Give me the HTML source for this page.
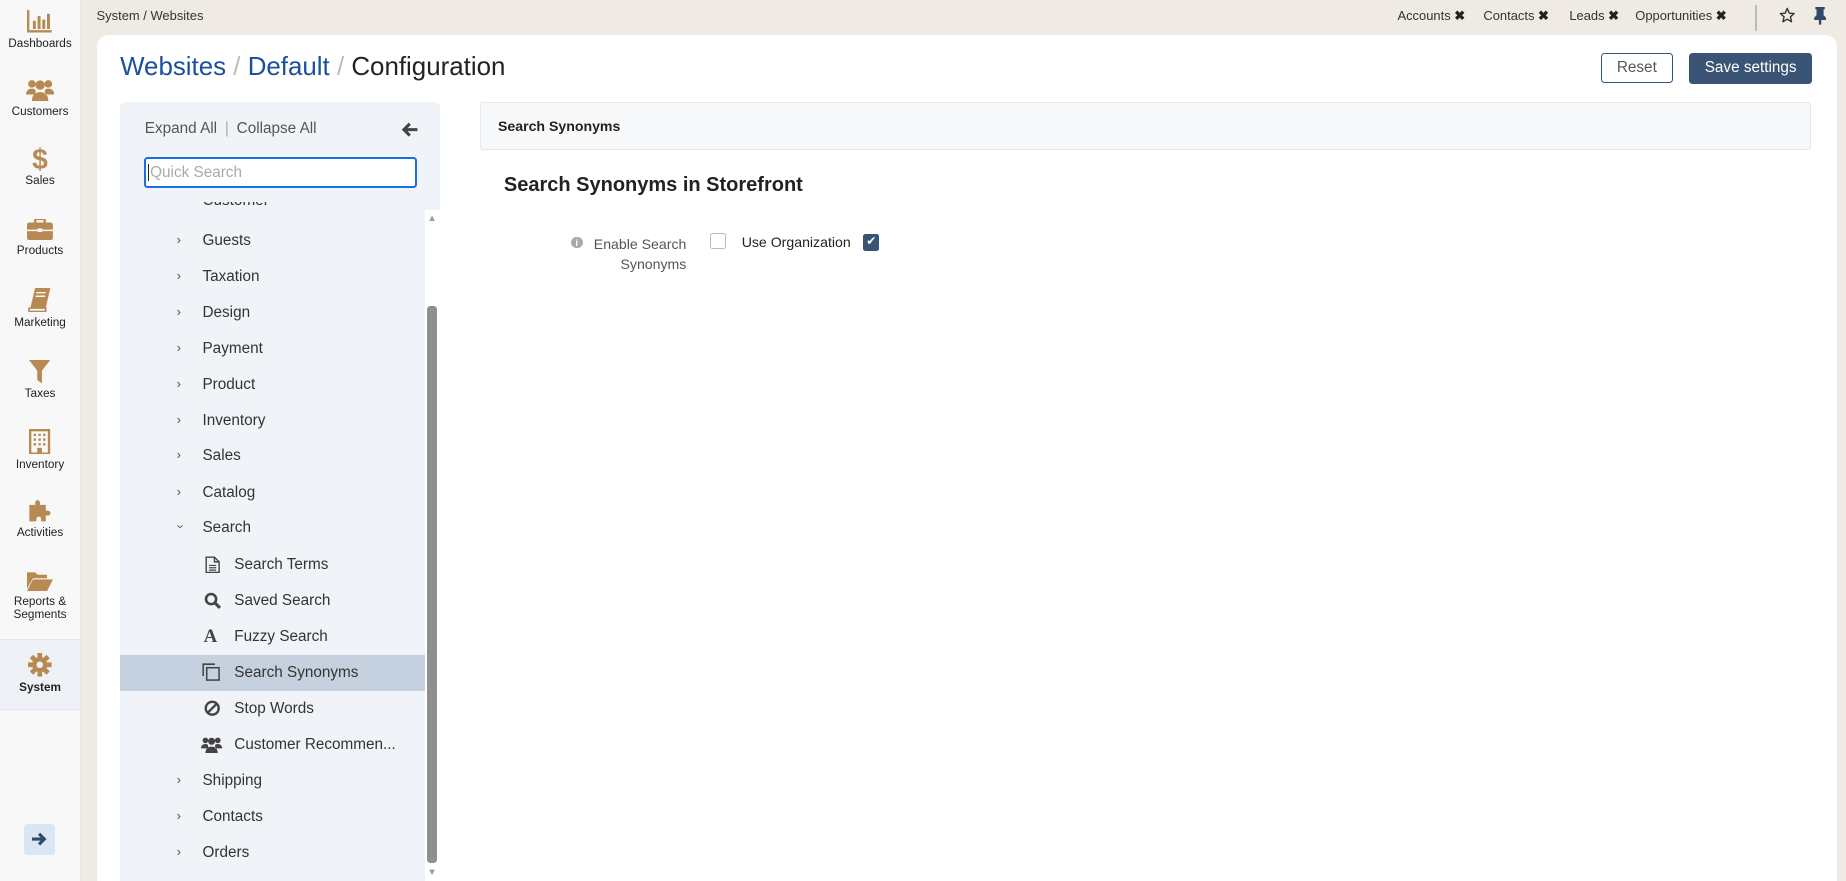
<!DOCTYPE html>
<html><head><meta charset="utf-8"><style>
html,body{margin:0;padding:0;}
html{background:#efebe4;height:881px;overflow:hidden;}
body{width:1568px;height:748px;zoom:1.17730;overflow:hidden;position:relative;background:#efebe4;font-family:"Liberation Sans",sans-serif;color:#222;}
.abs{position:absolute;}
#side{left:0;top:0;width:68px;height:748px;background:#f8f8f8;border-right:1px solid #e6e6e6;}
.si{position:absolute;left:0;width:68px;text-align:center;font-size:10px;color:#222;line-height:11px;}
.si svg{display:block;margin:0 auto 4px;}
.tab{font-size:11px;color:#333;top:7px;}
.tab b{font-size:11px;color:#222;margin-left:3px;}
#card{left:82px;top:30px;width:1478px;height:718px;background:#fff;border-radius:10px 10px 0 0;}
.tree{position:absolute;font-size:13px;color:#333;line-height:16px;}
.chev{position:absolute;left:150px;font-size:11px;color:#555;}
</style></head><body>
<div class="abs" style="left:82px;top:7px;font-size:11px;color:#333;">System / Websites</div>
<div class="abs tab" style="left:1187px;">Accounts<b>✖</b></div>
<div class="abs tab" style="left:1260px;">Contacts<b>✖</b></div>
<div class="abs tab" style="left:1333px;">Leads<b>✖</b></div>
<div class="abs tab" style="left:1389px;">Opportunities<b>✖</b></div>
<div class="abs" style="left:1491px;top:4px;width:1px;height:22px;background:#bbb;"></div>
<svg class="abs" style="left:1511px;top:6px" width="14" height="14" viewBox="0 0 24 24"><path d="M12 2l3 7 7 .6-5.4 4.7 1.7 7.2L12 17.8 5.7 21.5l1.7-7.2L2 9.6 9 9z" fill="none" stroke="#333" stroke-width="2" stroke-linejoin="round"/></svg>
<svg class="abs" style="left:1540px;top:6px" width="12" height="15" viewBox="0 0 12 15"><path d="M2 0h8v2H9v5l2 2v2H7v4H5v-4H1V9l2-2V2H2z" fill="#2f4a6a"/></svg>

<div id="side" class="abs">
 <div class="si" style="top:8px"><svg width="22" height="20" viewBox="0 0 22 20"><path d="M1 1v18h20" fill="none" stroke="#b68a52" stroke-width="2"/><rect x="5" y="10" width="2.5" height="7" fill="#b68a52"/><rect x="9" y="6" width="2.5" height="11" fill="#b68a52"/><rect x="13" y="9" width="2.5" height="8" fill="#b68a52"/><rect x="17" y="4" width="2.5" height="13" fill="#b68a52"/></svg>Dashboards</div>
 <div class="si" style="top:66px"><svg width="24" height="20" viewBox="0 0 24 20"><circle cx="5" cy="5" r="3.2" fill="#b68a52"/><circle cx="19" cy="5" r="3.2" fill="#b68a52"/><circle cx="12" cy="6" r="4" fill="#b68a52"/><path d="M0 14c0-4 3-5 5-5s3 1 3 1v4zM24 14c0-4-3-5-5-5s-3 1-3 1v4zM5 20c0-6 3-8 7-8s7 2 7 8z" fill="#b68a52"/></svg>Customers</div>
 <div class="si" style="top:125px"><div style="font-size:24px;font-weight:bold;color:#b68a52;line-height:22px;margin-bottom:2px">$</div>Sales</div>
 <div class="si" style="top:186px"><svg width="22" height="18" viewBox="0 0 22 18"><rect x="7" y="0" width="8" height="4" rx="1" fill="none" stroke="#b68a52" stroke-width="2"/><rect x="0" y="3" width="22" height="15" rx="2" fill="#b68a52"/><rect x="0" y="9" width="22" height="1.3" fill="#f8f8f8"/><rect x="9" y="8" width="4" height="3" fill="#f8f8f8"/></svg>Products</div>
 <div class="si" style="top:245px"><svg width="20" height="20" viewBox="0 0 20 20"><path d="M6 0h13l-4 17H2z" fill="#b68a52"/><path d="M2 17h13v3H2a1.5 1.5 0 010-3z" fill="none" stroke="#b68a52" stroke-width="1.5"/><path d="M7 4h8M6.5 7h8" stroke="#f8f8f8" stroke-width="1.2"/></svg>Marketing</div>
 <div class="si" style="top:306px"><svg width="18" height="20" viewBox="0 0 18 20"><path d="M0 0h18l-7 9v11l-4-3V9z" fill="#b68a52"/></svg>Taxes</div>
 <div class="si" style="top:364px"><svg width="18" height="22" viewBox="0 0 18 22"><rect x="1" y="1" width="16" height="20" fill="#f8f8f8" stroke="#b68a52" stroke-width="2"/><g fill="#b68a52"><rect x="4" y="4" width="2" height="2"/><rect x="8" y="4" width="2" height="2"/><rect x="12" y="4" width="2" height="2"/><rect x="4" y="8" width="2" height="2"/><rect x="8" y="8" width="2" height="2"/><rect x="12" y="8" width="2" height="2"/><rect x="4" y="12" width="2" height="2"/><rect x="8" y="12" width="2" height="2"/><rect x="12" y="12" width="2" height="2"/><rect x="7" y="16" width="4" height="5"/></g></svg>Inventory</div>
 <div class="si" style="top:424px"><svg width="22" height="20" viewBox="0 0 22 20"><path d="M2 5h5V3a2 2 0 014 0v2h5v5h2a2 2 0 010 4h-2v5h-4v-2a2 2 0 00-4 0v2H2z" fill="#b68a52"/></svg>Activities</div>
 <div class="si" style="top:484px"><svg width="22" height="18" viewBox="0 0 22 18"><path d="M0 2h7l2 2h8v3H5L0 16z" fill="#b68a52"/><path d="M5 8h17l-5 10H0z" fill="#b68a52"/></svg>Reports &amp;<br>Segments</div>
 <div class="abs" style="left:0;top:543px;width:68px;height:58px;background:#eef1f6;border-top:1px solid #e3e6ea;border-bottom:1px solid #e3e6ea;"></div>
 <div class="si" style="top:555px"><svg width="20" height="20" viewBox="0 0 20 20"><g fill="#b68a52"><circle cx="10" cy="10" r="6.5"/><g id="t"><rect x="8" y="0" width="4" height="5"/><rect x="8" y="15" width="4" height="5"/></g><use href="#t" transform="rotate(45 10 10)"/><use href="#t" transform="rotate(90 10 10)"/><use href="#t" transform="rotate(135 10 10)"/></g><circle cx="10" cy="10" r="2.8" fill="#eef1f6"/></svg><span style="font-weight:bold;color:#222">System</span></div>
 <div class="abs" style="left:20px;top:700px;width:27px;height:26px;background:#dbe6f3;border-radius:3px;"><svg style="position:absolute;left:7px;top:7px" width="13" height="12" viewBox="0 0 13 12"><path d="M0 6h10M6 1.5L10.5 6 6 10.5" fill="none" stroke="#2f4a6a" stroke-width="2.6"/></svg></div>
</div>

<div id="card" class="abs"></div>
<div class="abs" style="left:102px;top:43px;font-size:22px;line-height:28px;"><span style="color:#1c4f9c">Websites</span> <span style="color:#bbb">/</span> <span style="color:#1c4f9c">Default</span> <span style="color:#bbb">/</span> <span style="color:#222">Configuration</span></div>
<div class="abs" style="left:1360px;top:45px;width:59px;height:24px;border:1px solid #34557a;border-radius:3px;text-align:center;line-height:24px;font-size:13px;color:#555;">Reset</div>
<div class="abs" style="left:1435px;top:45px;width:104px;height:26px;background:#395475;border-radius:3px;text-align:center;line-height:26px;font-size:13px;color:#fff;">Save settings</div>

<div class="abs" style="left:102px;top:87px;width:272px;height:661px;background:#f0f3f8;border-radius:4px 4px 0 0;"></div>
<div class="abs" style="left:123px;top:102px;font-size:13px;color:#555;">Expand All <span style="color:#aaa;margin:0 3px">|</span> Collapse All</div>
<svg class="abs" style="left:341px;top:104px" width="14" height="13" viewBox="0 0 14 13"><path d="M14 6.5H3M7.5 1.5L2.5 6.5l5 5" fill="none" stroke="#444" stroke-width="2.6"/></svg>
<div class="abs" style="left:172px;top:172px;width:100px;height:6px;overflow:hidden;"><div style="font-size:13px;margin-top:-9px;color:#333">Customer</div></div>
<div class="abs" style="left:122px;top:133px;width:227px;height:23px;background:#fff;border:2px solid #1a6fe0;border-radius:3px;font-size:13px;color:#aaa;line-height:23px;padding-left:2px;"><span style="border-left:1px solid #222;padding-left:1px">Quick Search</span></div>
<div class="abs" style="left:361px;top:178px;width:13px;height:570px;background:#fff;"></div>
<div class="abs" style="left:363px;top:260px;width:8px;height:473px;background:#8f8f8f;border-radius:3px;"></div>
<div class="abs" style="left:363px;top:180px;font-size:8px;color:#999;">▲</div>
<div class="abs" style="left:363px;top:736px;font-size:8px;color:#999;">▼</div>
<div class="abs" style="left:102px;top:556px;width:259px;height:31px;background:#c5d1de;"></div>

<div class="chev" style="top:197px">›</div><div class="tree" style="left:172px;top:197px">Guests</div>
<div class="chev" style="top:228px">›</div><div class="tree" style="left:172px;top:228px">Taxation</div>
<div class="chev" style="top:258px">›</div><div class="tree" style="left:172px;top:258px">Design</div>
<div class="chev" style="top:289px">›</div><div class="tree" style="left:172px;top:289px">Payment</div>
<div class="chev" style="top:319px">›</div><div class="tree" style="left:172px;top:319px">Product</div>
<div class="chev" style="top:350px">›</div><div class="tree" style="left:172px;top:350px">Inventory</div>
<div class="chev" style="top:380px">›</div><div class="tree" style="left:172px;top:380px">Sales</div>
<div class="chev" style="top:411px">›</div><div class="tree" style="left:172px;top:411px">Catalog</div>
<div class="chev" style="top:441px;transform:rotate(90deg);left:152px">›</div><div class="tree" style="left:172px;top:441px">Search</div>
<svg class="abs" style="left:174px;top:472px" width="13" height="15" viewBox="0 0 13 15"><path d="M1 1h7l4 4v9H1z M8 1v4h4" fill="none" stroke="#444" stroke-width="1.2"/><path d="M3.5 8h6M3.5 10h6M3.5 12h6" stroke="#444"/></svg><div class="tree" style="left:199px;top:472px">Search Terms</div>
<svg class="abs" style="left:173px;top:503px" width="15" height="15" viewBox="0 0 15 15"><circle cx="6" cy="6" r="4.3" fill="none" stroke="#444" stroke-width="2.2"/><path d="M9 9l4.5 4.5" stroke="#444" stroke-width="2.6"/></svg><div class="tree" style="left:199px;top:503px">Saved Search</div>
<div class="abs" style="left:173px;top:532px;font-family:'Liberation Serif',serif;font-weight:bold;font-size:16px;color:#444">A</div><div class="tree" style="left:199px;top:533px">Fuzzy Search</div>
<svg class="abs" style="left:172px;top:563px" width="16" height="16" viewBox="0 0 16 16"><path d="M1 11V1h10" fill="none" stroke="#444" stroke-width="1.3"/><rect x="4" y="4" width="10.5" height="10.5" fill="none" stroke="#444" stroke-width="1.3"/></svg><div class="tree" style="left:199px;top:564px">Search Synonyms</div>
<svg class="abs" style="left:173px;top:595px" width="14" height="14" viewBox="0 0 14 14"><circle cx="7" cy="7" r="5.5" fill="none" stroke="#444" stroke-width="2"/><path d="M3 11L11 3" stroke="#444" stroke-width="2"/></svg><div class="tree" style="left:199px;top:595px">Stop Words</div>
<svg class="abs" style="left:171px;top:625px" width="18" height="15" viewBox="0 0 24 20"><circle cx="5" cy="5" r="3.2" fill="#444"/><circle cx="19" cy="5" r="3.2" fill="#444"/><circle cx="12" cy="6" r="4" fill="#444"/><path d="M0 14c0-4 3-5 5-5s3 1 3 1v4zM24 14c0-4-3-5-5-5s-3 1-3 1v4zM5 20c0-6 3-8 7-8s7 2 7 8z" fill="#444"/></svg><div class="tree" style="left:199px;top:625px">Customer Recommen...</div>
<div class="chev" style="top:656px">›</div><div class="tree" style="left:172px;top:656px">Shipping</div>
<div class="chev" style="top:686px">›</div><div class="tree" style="left:172px;top:686px">Contacts</div>
<div class="chev" style="top:717px">›</div><div class="tree" style="left:172px;top:717px">Orders</div>

<div class="abs" style="left:408px;top:87px;width:1129px;height:39px;background:#f6f8fa;border:1px solid #e4e7eb;border-radius:3px;"></div>
<div class="abs" style="left:423px;top:100px;font-size:12px;font-weight:bold;color:#222;">Search Synonyms</div>
<div class="abs" style="left:428px;top:148px;font-size:17px;font-weight:bold;color:#222;">Search Synonyms in Storefront</div>
<div class="abs" style="left:485px;top:201px;width:10px;height:10px;border-radius:50%;background:#aaa;color:#fff;font-size:8px;font-weight:bold;text-align:center;line-height:10px;">i</div>
<div class="abs" style="left:490px;top:199px;width:93px;text-align:right;font-size:12px;line-height:17px;color:#555;">Enable Search<br>Synonyms</div>
<div class="abs" style="left:603px;top:198px;width:12px;height:12px;border:1px solid #bbb;border-radius:2px;background:#fff;"></div>
<div class="abs" style="left:630px;top:199px;font-size:12px;color:#222;">Use Organization</div>
<div class="abs" style="left:733px;top:199px;width:14px;height:14px;background:#395475;border-radius:2px;color:#fff;font-size:10px;text-align:center;line-height:14px;">✔</div>
</body></html>
